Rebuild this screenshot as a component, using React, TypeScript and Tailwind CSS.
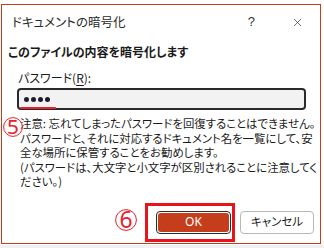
import { X } from "lucide-react";

const jp = "[font-family:'Noto_Sans_CJK_JP','Noto_Sans',sans-serif] [font-feature-settings:'palt']";

const Circled = ({ n, size }: { n: string; size: number }) => {
  const digitH = size * 0.74;
  return (
    <svg width={size} height={size} viewBox={`0 0 ${size} ${size}`} overflow="visible">
      <circle cx={size / 2} cy={size / 2} r={size / 2 - 0.6} fill="none" stroke="#e8202a" strokeWidth="1" />
      <text
        x={size / 2}
        y={size / 2 + digitH / 2}
        textAnchor="middle"
        fontSize={digitH / 0.714}
        fill="#e8202a"
        fontFamily="'Noto Sans', 'Liberation Sans', sans-serif"
      >
        {n}
      </text>
    </svg>
  );
};

const notes = [
  "注意: 忘れてしまったパスワードを回復することはできません。",
  "パスワードと、それに対応するドキュメント名を一覧にして、安",
  "全な場所に保管することをお勧めします。",
  "(パスワードは、大文字と小文字が区別されることに注意してく",
  "ださい。)",
];

const App = () => {
  return (
    <div className={`relative h-[248px] w-[324px] overflow-hidden bg-white ${jp}`}>
      <div className="ml-[1px] mt-[4px] h-[240px] w-[320px] border border-[#c43e1c] bg-white text-[#1a1a1a]">
        {/* title bar */}
        <div className="flex h-[34px] items-center pl-[10px] pr-[16px]">
          <span className="text-[12.5px] text-[#2b2b2b]">ドキュメントの暗号化</span>
          <span className="ml-auto text-[13px] [font-family:'Liberation_Sans',sans-serif] text-[#333]">?</span>
          <X className="ml-[36px] h-[13px] w-[13px] text-[#333]" strokeWidth={1.3} />
        </div>

        <div className="mt-[5px] pl-[6px] text-[12px] font-bold leading-[16px]">
          このファイルの内容を暗号化します
        </div>

        <div className="mt-[10px] pl-[16px] text-[12px] leading-[16px]">
          パスワード(<span className="underline underline-offset-2">R</span>):
        </div>

        <div className="relative ml-[15px] mt-[2px] flex h-[22px] w-[289px] items-center gap-[2px] rounded-[4px] border-2 border-[#2a2a2a] bg-[#f2f2f2] pl-[5px]">
          <span className="h-[5px] w-[5px] rounded-full bg-[#1c1c2c]" />
          <span className="h-[5px] w-[5px] rounded-full bg-[#1c1c2c]" />
          <span className="h-[5px] w-[5px] rounded-full bg-[#1c1c2c]" />
          <span className="h-[5px] w-[5px] rounded-full bg-[#1c1c2c]" />
          <span className="absolute bottom-[-1px] left-[1px] h-[2px] w-[36px] rounded-full bg-[#e8202a]" />
        </div>

        <div className="mt-[6px] pl-[18px] text-[11.4px] leading-[14.5px]">
          {notes.map((line) => (
            <div key={line} className="whitespace-nowrap">
              {line}
            </div>
          ))}
        </div>

        <div className="mt-[22px] flex justify-end gap-[9px] pr-[6px]">
          <button className="flex h-[23px] w-[75px] items-center justify-center rounded-[4px] border border-[#2b2b2b] p-[1px]">
            <span className="flex h-full w-full items-center justify-center rounded-[3px] bg-[#c43e1c] text-[12px] text-white [font-family:'Noto_Sans','Liberation_Sans',sans-serif]">
              OK
            </span>
          </button>
          <button className="flex h-[23px] w-[74px] items-center justify-center rounded-[4px] border border-[#b8b8b8] bg-white text-[11.5px] text-[#1a1a1a]">
            キャンセル
          </button>
        </div>
      </div>
      <div className="mt-[1px] h-[4px] bg-[#f0f0f0]" />

      {/* annotations */}
      <div className="absolute left-[3px] top-[117px]">
        <Circled n="5" size={20} />
      </div>
      <div className="absolute left-[115px] top-[209px]">
        <Circled n="6" size={22} />
      </div>
      <div className="absolute left-[145px] top-[203px] h-[39px] w-[90px] border-[3px] border-[#e8141c]" />
    </div>
  );
};

export default App;
